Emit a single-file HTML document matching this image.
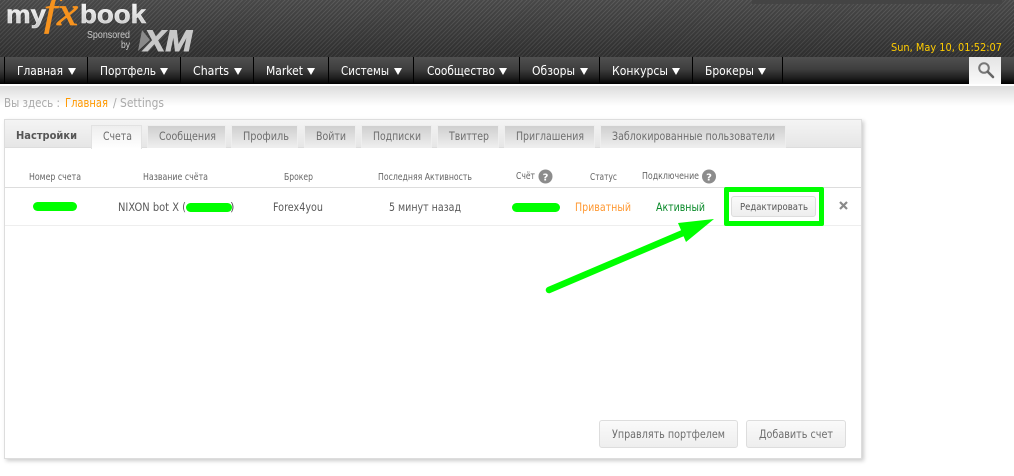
<!DOCTYPE html>
<html lang="ru"><head><meta charset="utf-8"><title>Settings</title>
<style>
html,body{margin:0;padding:0;background:#fff;width:1014px;height:476px;overflow:hidden}
div{position:absolute;box-sizing:border-box}
#hd{left:0;top:0;width:1014px;height:57px;background:repeating-linear-gradient(135deg,rgba(255,255,255,.06) 0 1px,rgba(0,0,0,.1) 1px 3px),linear-gradient(#505050,#343434)}
#top{left:752px;top:0;width:250px;height:4px;background:#444}
#nav{left:0;top:57px;width:1014px;height:27px;background:linear-gradient(#505050 0,#3e3e3e 45%,#1c1c1c 80%,#000 100%)}
#fade{left:0;top:86px;width:1014px;height:20px;background:linear-gradient(#dcdcdc,#fff)}
.sep{top:57px;width:1px;height:26px;background:#000}
#search{left:969px;top:57px;width:32px;height:27px;background:linear-gradient(#e4e4e4,#fafafa)}
#panel{left:4px;top:119px;width:858px;height:340px;background:#fff;border:1px solid #ddd;box-shadow:2px 2px 4px #ccc}
#strip{left:5px;top:120px;width:856px;height:28px;background:linear-gradient(#f4f4f4,#e6e6e6);border-bottom:1px solid #ddd}
.tab{top:125px;height:23px;background:linear-gradient(#cfcfcf,#efefef);border:1px solid #eee;border-bottom:0}
.on{background:linear-gradient(#eee,#fff);border-color:#e2e2e2;height:24px}
.ln{left:5px;width:856px;height:1px}
.pill{background:#0f0;border-radius:5px;height:9px}
.btn{background:linear-gradient(#fafafa,#eee);border:1px solid #ddd;border-radius:3px}
svg{position:absolute;left:0;top:0}
text{font-family:"DejaVu Sans","Liberation Sans",sans-serif;font-size:11px;white-space:pre}
.n{fill:#fff;font-size:12px}
.t{fill:#6e6e6e;font-size:11.5px}
.h{fill:#666;font-size:9.5px}
.r{fill:#5a5a5a;font-size:11.5px}
</style></head><body>
<div id="hd"></div><div id="top"></div>
<div id="nav"></div>
<div class="sep" style="left:4px"></div><div class="sep" style="left:87px"></div><div class="sep" style="left:180px"></div><div class="sep" style="left:253px"></div><div class="sep" style="left:328px"></div><div class="sep" style="left:413px"></div><div class="sep" style="left:519px"></div><div class="sep" style="left:599px"></div><div class="sep" style="left:692px"></div><div class="sep" style="left:782px"></div>
<div id="search"></div>
<div id="fade"></div>
<div id="panel"></div><div id="strip"></div>
<div class="tab on" style="left:91px;width:51px"></div>
<div class="tab" style="left:147px;width:79px"></div>
<div class="tab" style="left:231px;width:67px"></div>
<div class="tab" style="left:304px;width:52px"></div>
<div class="tab" style="left:361px;width:71px"></div>
<div class="tab" style="left:437px;width:62px"></div>
<div class="tab" style="left:504px;width:91px"></div>
<div class="tab" style="left:600px;width:186px"></div>
<div class="ln" style="top:187px;background:#ddd"></div>
<div class="ln" style="top:225px;background:#eee"></div>
<div class="pill" style="left:33px;top:202px;width:44px"></div>
<div class="pill" style="left:186px;top:203px;width:46px"></div>
<div class="pill" style="left:512px;top:203px;width:48px"></div>
<div class="btn" style="left:731px;top:196px;width:85px;height:21px"></div>
<div class="btn" style="left:599px;top:420px;width:139px;height:28px"></div>
<div class="btn" style="left:746px;top:420px;width:100px;height:28px"></div>
<div style="left:724px;top:187px;width:100px;height:39px;border:5px solid #0f0;border-radius:2px"></div>
<svg width="1014" height="476" viewBox="0 0 1014 476">
<defs><linearGradient id="lg" x1="0" y1="0" x2="0" y2="1"><stop offset="0" stop-color="#fff"/><stop offset="1" stop-color="#c4c4c4"/></linearGradient></defs>
<text x="6" y="23" textLength="40" lengthAdjust="spacingAndGlyphs" fill="url(#lg)" stroke="#eee" stroke-width=".5" style="font:bold 25px 'Liberation Sans',sans-serif">my</text>
<text x="44" y="25" textLength="34" lengthAdjust="spacingAndGlyphs" fill="#f7931e" stroke="#f7931e" stroke-width=".7" style="font:italic 40px 'Liberation Serif',serif">fx</text>
<text x="80" y="23" textLength="66" lengthAdjust="spacingAndGlyphs" fill="url(#lg)" stroke="#eee" stroke-width=".5" style="font:bold 26px 'Liberation Sans',sans-serif">book</text>
<text x="87" y="38" textLength="43" lengthAdjust="spacingAndGlyphs" fill="#ccc" style="font:10.5px 'Liberation Sans',sans-serif">Sponsored</text>
<text x="121" y="48" textLength="9" lengthAdjust="spacingAndGlyphs" fill="#ccc" style="font:10.5px 'Liberation Sans',sans-serif">by</text>
<text x="144" y="51" textLength="48" lengthAdjust="spacingAndGlyphs" fill="#c8c8c8" stroke="#c8c8c8" stroke-width="1" style="font:italic bold 30px 'Liberation Sans',sans-serif">XM</text>
<polygon points="142,30 150,40 138,51" fill="#8a8a8a"/>
<text x="891" y="51" textLength="111" fill="#fc0" lengthAdjust="spacingAndGlyphs">Sun, May 10, 01:52:07</text>

<text class="n" x="17" y="75" textLength="46" lengthAdjust="spacingAndGlyphs">Главная</text><path d="M68 68h8l-4 7z" fill="#fff"/>
<text class="n" x="100" y="75" textLength="56" lengthAdjust="spacingAndGlyphs">Портфель</text><path d="M160 68h8l-4 7z" fill="#fff"/>
<text class="n" x="193" y="75" textLength="36" lengthAdjust="spacingAndGlyphs">Charts</text><path d="M234 68h8l-4 7z" fill="#fff"/>
<text class="n" x="266" y="75" textLength="37" lengthAdjust="spacingAndGlyphs">Market</text><path d="M307 68h8l-4 7z" fill="#fff"/>
<text class="n" x="341" y="75" textLength="48" lengthAdjust="spacingAndGlyphs">Системы</text><path d="M394 68h8l-4 7z" fill="#fff"/>
<text class="n" x="427" y="75" textLength="68" lengthAdjust="spacingAndGlyphs">Сообщество</text><path d="M499 68h8l-4 7z" fill="#fff"/>
<text class="n" x="532" y="75" textLength="43" lengthAdjust="spacingAndGlyphs">Обзоры</text><path d="M580 68h8l-4 7z" fill="#fff"/>
<text class="n" x="612" y="75" textLength="56" lengthAdjust="spacingAndGlyphs">Конкурсы</text><path d="M672 68h8l-4 7z" fill="#fff"/>
<text class="n" x="705" y="75" textLength="49" lengthAdjust="spacingAndGlyphs">Брокеры</text><path d="M758 68h8l-4 7z" fill="#fff"/>
<circle cx="984" cy="68" r="4.8" fill="none" stroke="#777" stroke-width="2"/>
<path d="M988 72l5 5" stroke="#666" stroke-width="2.6" stroke-linecap="round"/>

<text x="4" y="107" textLength="56" lengthAdjust="spacingAndGlyphs" fill="#aaa" style="font-size:12.5px">Вы здесь :</text>
<text x="65" y="107" textLength="43" lengthAdjust="spacingAndGlyphs" fill="#f90" style="font-size:12.5px">Главная</text>
<text x="113" y="107" textLength="51" lengthAdjust="spacingAndGlyphs" fill="#aaa" style="font-size:12.5px">/ Settings</text>

<text x="16" y="139" textLength="61" lengthAdjust="spacingAndGlyphs" fill="#555" font-weight="bold">Настройки</text>
<text class="t" x="103" y="140" textLength="29" lengthAdjust="spacingAndGlyphs">Счета</text>
<text class="t" x="159" y="140" textLength="57" lengthAdjust="spacingAndGlyphs">Сообщения</text>
<text class="t" x="243" y="140" textLength="46" lengthAdjust="spacingAndGlyphs">Профиль</text>
<text class="t" x="316" y="140" textLength="30" lengthAdjust="spacingAndGlyphs">Войти</text>
<text class="t" x="373" y="140" textLength="48" lengthAdjust="spacingAndGlyphs">Подписки</text>
<text class="t" x="449" y="140" textLength="40" lengthAdjust="spacingAndGlyphs">Твиттер</text>
<text class="t" x="516" y="140" textLength="68" lengthAdjust="spacingAndGlyphs">Приглашения</text>
<text class="t" x="612" y="140" textLength="163" lengthAdjust="spacingAndGlyphs">Заблокированные пользователи</text>

<text class="h" x="29" y="180" textLength="52" lengthAdjust="spacingAndGlyphs">Номер счета</text>
<text class="h" x="143" y="180" textLength="65" lengthAdjust="spacingAndGlyphs">Название счёта</text>
<text class="h" x="284" y="180" textLength="29" lengthAdjust="spacingAndGlyphs">Брокер</text>
<text class="h" x="378" y="180" textLength="94" lengthAdjust="spacingAndGlyphs">Последняя Активность</text>
<text class="h" x="516" y="179" textLength="19" lengthAdjust="spacingAndGlyphs">Счёт</text>
<text class="h" x="590" y="180" textLength="27" lengthAdjust="spacingAndGlyphs">Статус</text>
<text class="h" x="642" y="179" textLength="57" lengthAdjust="spacingAndGlyphs">Подключение</text>
<circle cx="545.5" cy="176.5" r="7" fill="#8c8c8c"/><text x="545.5" y="180.5" text-anchor="middle" fill="#fff" font-weight="bold" style="font-size:10px">?</text>
<circle cx="709" cy="176.5" r="7" fill="#8c8c8c"/><text x="709" y="180.5" text-anchor="middle" fill="#fff" font-weight="bold" style="font-size:10px">?</text>

<text class="r" x="118" y="211" textLength="68" lengthAdjust="spacingAndGlyphs">NIXON bot X (</text>
<text class="r" x="230" y="211">)</text>
<text class="r" x="273" y="211" textLength="50" lengthAdjust="spacingAndGlyphs">Forex4you</text>
<text class="r" x="389" y="211" textLength="72" lengthAdjust="spacingAndGlyphs">5 минут назад</text>
<text x="575" y="211" textLength="56" lengthAdjust="spacingAndGlyphs" fill="#f93" style="font-size:11.5px">Приватный</text>
<text x="656" y="211" textLength="49" lengthAdjust="spacingAndGlyphs" fill="#0a8a2a" style="font-size:11.5px">Активный</text>
<text x="740" y="210" textLength="68" lengthAdjust="spacingAndGlyphs" fill="#555" style="font-size:9.5px">Редактировать</text>
<path d="M840 202l7 7M847 202l-7 7" stroke="#8a8a8a" stroke-width="2.2"/>

<text x="612" y="438" textLength="113" lengthAdjust="spacingAndGlyphs" fill="#6e6e6e" style="font-size:11.5px">Управлять портфелем</text>
<text x="759" y="438" textLength="74" lengthAdjust="spacingAndGlyphs" fill="#6e6e6e" style="font-size:11.5px">Добавить счет</text>

<path d="M549 290L690 230" stroke="#0f0" stroke-width="6.5" stroke-linecap="round"/>
<polygon points="678,223 714,219 686,242" fill="#0f0"/>
</svg>
</body></html>
